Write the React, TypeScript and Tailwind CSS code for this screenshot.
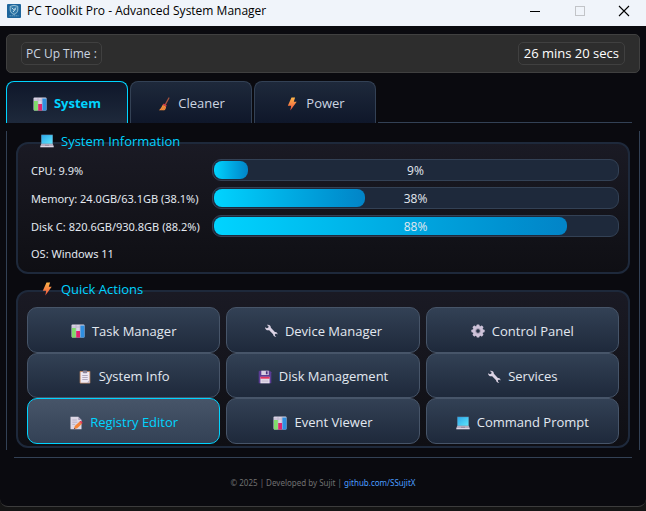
import { useState } from "react";
import type { ReactNode } from "react";

function ChartIcon() {
  return (
    <svg viewBox="0 0 14 14" className="size-[14px] shrink-0" aria-hidden="true">
      <rect x="0.5" y="0.5" width="13" height="13" rx="1" fill="#d9d3e3" />
      <path d="M5 1v12M9 1v12M1 3h12" stroke="#b7aec6" strokeWidth="0.7" />
      <rect x="1" y="4" width="3.8" height="9.5" fill="#7fdc6a" />
      <rect x="5.2" y="7" width="3.8" height="6.5" fill="#e0246f" />
      <rect x="9.4" y="1.5" width="4" height="12" fill="#2f8fe0" />
    </svg>
  );
}

function BroomIcon() {
  return (
    <svg viewBox="0 0 14 14" className="size-[14px] shrink-0" aria-hidden="true">
      <path d="M11.900 1 8.300 7.600" stroke="#a4533f" strokeWidth="1.300" strokeLinecap="round" />
      <path d="m6.800 6.600 2.900 1.700-.6 1.400-3.400-2z" fill="#d83b4c" />
      <path d="M5.700 7.700 9.100 9.700C8.800 12 8.100 13 7.300 13.200H1.800C3.600 12 4.500 10.500 5.700 7.700z" fill="#f2913d" />
      <path d="m6.600 9.400-2.200 3.600M7.900 10.200l-1.400 3" stroke="#d4652d" strokeWidth="0.600" />
    </svg>
  );
}

function BoltIcon() {
  return (
    <svg viewBox="0 0 14 14" className="size-[14px] shrink-0" aria-hidden="true">
      <defs>
        <linearGradient id="bolt" x1="0" y1="0" x2="0" y2="1">
          <stop offset="0" stopColor="#ffb648" />
          <stop offset="1" stopColor="#f0503f" />
        </linearGradient>
      </defs>
      <path d="M6.500.6h3.600L8.800 4.700h2.900L5.300 13.500 6.200 8.800H2.800z" fill="url(#bolt)" />
    </svg>
  );
}

function LaptopIcon() {
  return (
    <svg viewBox="0 0 14 14" className="size-[14px] shrink-0" aria-hidden="true">
      <defs>
        <linearGradient id="screen" x1="0" y1="0" x2="1" y2="1">
          <stop offset="0" stopColor="#2fa8ea" />
          <stop offset="1" stopColor="#5de6fb" />
        </linearGradient>
      </defs>
      <rect x="1" y="0.600" width="12" height="9.600" rx="0.600" fill="#4b6a86" />
      <rect x="1.600" y="1.100" width="10.800" height="8.700" fill="url(#screen)" />
      <path d="M1.300 9.800h11.400l1 2.200H.3z" fill="#b5adbf" />
      <path d="M.3 12h13.400v1.300H.3z" fill="#ded8e6" />
      <path d="M5 11.300h4" stroke="#8b8298" strokeWidth="0.800" />
    </svg>
  );
}

function WrenchIcon() {
  return (
    <svg viewBox="0 0 14 14" className="size-[14px] shrink-0" aria-hidden="true">
      <path
        d="M1 3.200 3 4.300l1.400-.7.100-1.600L2.800 1C5 .4 6.900 1.700 6.900 3.800l4 4.100c1.700-.2 2.900 1.100 2.600 2.700l-1.500-1-1.200.8.300 1.400 1.300.8c-1.700.5-3.200-.6-3.300-2.300L5.200 6.200C3 6.800 1.100 5.400 1 3.200z"
        fill="#dcd3e4"
      />
    </svg>
  );
}

const TEETH = [0, 45, 90, 135, 180, 225, 270, 315];

function GearIcon() {
  return (
    <svg viewBox="0 0 14 14" className="size-[14px] shrink-0" aria-hidden="true">
      {TEETH.map((angle) => (
        <rect key={angle} x="5.500" y="0.400" width="3" height="3" rx="0.800" fill="#cdc2d8" transform={`rotate(${angle} 7 7)`} />
      ))}
      <circle cx="7" cy="7" r="3.600" fill="none" stroke="#cdc2d8" strokeWidth="3.200" />
      <circle cx="7" cy="7" r="2.400" fill="none" stroke="#978ba5" strokeWidth="0.700" />
    </svg>
  );
}

function ClipboardIcon() {
  return (
    <svg viewBox="0 0 14 14" className="size-[14px] shrink-0" aria-hidden="true">
      <rect x="1.700" y="1" width="10.600" height="12.500" rx="0.800" fill="#c08a68" />
      <rect x="2.600" y="2" width="8.800" height="10.700" fill="#eee8f3" />
      <rect x="4.800" y="0.500" width="4.400" height="2.700" rx="0.800" fill="#8c8398" />
      <path d="M4.300 5.500h5.400M4.300 7.500h5.400M4.300 9.500h5.400" stroke="#aaa1b8" strokeWidth="0.900" />
      <path d="m8.900 12.700 2.500-2.500v2.500z" fill="#b9b0c5" />
    </svg>
  );
}

function FloppyIcon() {
  return (
    <svg viewBox="0 0 14 14" className="size-[14px] shrink-0" aria-hidden="true">
      <path d="M1.500.7h10.300l1.500 1.500v11.100H.7V1.500z" fill="#5b3c94" />
      <rect x="3.300" y="0.700" width="7.400" height="4.300" fill="#d8cfe3" />
      <rect x="7.900" y="1.300" width="1.700" height="3" fill="#49307c" />
      <rect x="2.400" y="6.800" width="9.200" height="6.500" fill="#e8e2ee" />
      <rect x="2.400" y="6.800" width="9.200" height="1.900" fill="#e6345f" />
      <path d="M3.600 10.200h6.800M3.600 11.700h6.800" stroke="#b8acc7" strokeWidth="0.600" />
    </svg>
  );
}

function MemoIcon() {
  return (
    <svg viewBox="0 0 14 14" className="size-[14px] shrink-0" aria-hidden="true">
      <path d="M1.500.7h7.800l3.200 3.200v9.400h-11z" fill="#ded8e6" />
      <path d="M9.300.7v3.200h3.200z" fill="#a69bb5" />
      <path d="M3.300 4h4.500M3.300 6.200h5M3.300 8.400h3" stroke="#b2a8bf" strokeWidth="0.800" />
      <path d="m10.400 5.800 2.400 2.200-4.600 4.300-3.300 1 .9-3.200z" fill="#f58438" />
      <path d="m10.400 5.800.9-.8c.9-.5 2.400.8 2.200 1.900l-.7 1.100z" fill="#e4364f" />
      <path d="m4.900 13.300.4-1.500 1 .9z" fill="#55405a" />
    </svg>
  );
}

function AppIcon() {
  return (
    <svg viewBox="0 0 14 14" className="size-[14px] shrink-0" aria-hidden="true">
      <rect width="14" height="14" rx="1" fill="#1d659c" />
      <path d="M3.200 2.300 7 1.300l3.800 1v3.800c0 2-1.500 3.400-3.800 4.300-2.300-.9-3.800-2.300-3.800-4.300z" fill="#3279a9" stroke="#a8cddd" strokeWidth="0.900" />
      <path d="m4.800 3.800 2 1.900 2.400-2M6 8l2.600-3" stroke="#d7eaf2" strokeWidth="0.900" fill="none" />
      <path d="M2.500 11.800h9" stroke="#79aecb" strokeWidth="0.800" strokeDasharray="1.500 .5" />
    </svg>
  );
}

const tabs = [
  { name: "System", icon: <ChartIcon /> },
  { name: "Cleaner", icon: <BroomIcon /> },
  { name: "Power", icon: <BoltIcon /> },
];

const meters = [
  { id: "cpu", label: "CPU: 9.9%", value: 9 },
  { id: "memory", label: "Memory: 24.0GB/63.1GB (38.1%)", value: 38 },
  { id: "disk", label: "Disk C: 820.6GB/930.8GB (88.2%)", value: 88 },
];

const actions = [
  { name: "Task Manager", icon: <ChartIcon /> },
  { name: "Device Manager", icon: <WrenchIcon /> },
  { name: "Control Panel", icon: <GearIcon /> },
  { name: "System Info", icon: <ClipboardIcon /> },
  { name: "Disk Management", icon: <FloppyIcon /> },
  { name: "Services", icon: <WrenchIcon /> },
  { name: "Registry Editor", icon: <MemoIcon /> },
  { name: "Event Viewer", icon: <ChartIcon /> },
  { name: "Command Prompt", icon: <LaptopIcon /> },
];

function TitleBar() {
  return (
    <header className="flex h-[26px] items-center bg-[#f0f4fa] pb-[5px] pl-[7px] text-black">
      <AppIcon />
      <h1 className="ml-[6px] flex-1 text-xs">PC Toolkit Pro - Advanced System Manager</h1>
      <button aria-label="Minimize" className="flex w-[46px] justify-center">
        <svg viewBox="0 0 12 12" className="size-3"><path d="M1 6.500h10" stroke="currentColor" /></svg>
      </button>
      <button aria-label="Maximize" disabled className="flex w-[44px] justify-center text-[#c2c4c8]">
        <svg viewBox="0 0 12 12" className="size-3"><rect x="1.500" y="1.500" width="9" height="9" fill="none" stroke="currentColor" /></svg>
      </button>
      <button aria-label="Close" className="flex w-[44px] justify-center">
        <svg viewBox="0 0 12 12" className="size-3"><path d="m1 1 10 10M11 1 1 11" stroke="currentColor" strokeWidth="1.100" /></svg>
      </button>
    </header>
  );
}

function Group({ title, icon, children }: { title: string; icon: ReactNode; children: ReactNode }) {
  return (
    <section className="relative rounded-xl border-2 border-[#1e293b] bg-linear-to-b from-[#1a1a24] to-[#0f0f14]">
      <h2 className="absolute -top-[13px] left-[22px] flex items-center gap-[7px] text-[13px] leading-5 font-medium text-[#00d4ff]">
        {icon}
        {title}
      </h2>
      {children}
    </section>
  );
}

export default function App() {
  const [tab, setTab] = useState("System");
  const [action, setAction] = useState("Registry Editor");

  return (
    <div className="min-h-screen bg-[#151515] font-['Open_Sans','Noto_Sans',sans-serif] text-[#e2e8f0]">
      <TitleBar />
      <div className="rounded-b-lg border-b border-[#3c3c3c] bg-[#0a0a0f] px-[6px] pt-2 pb-[15px]">
        <div className="flex h-[39px] items-center justify-between rounded-[5px] border border-[#404040] bg-[#2d2d2d] px-[14px]">
          <span className="rounded-[5px] border border-[#404040] px-1 text-xs leading-[21px] text-[#cbd5e1]">PC Up Time :</span>
          <span className="rounded-[5px] border border-[#404040] px-[5px] text-[13px] leading-[21px] text-white">26 mins 20 secs</span>
        </div>

        <div role="tablist" className="mt-2 flex gap-[2px]">
          {tabs.map(({ name, icon }) => (
            <button
              key={name}
              role="tab"
              aria-selected={tab === name}
              onClick={() => setTab(name)}
              className={
                "flex h-[42px] w-[122px] items-center justify-center gap-[7px] rounded-t-lg border border-b-0 pt-[3px] text-[13px] " +
                (tab === name
                  ? "border-[#00d4ff] bg-linear-to-b from-[#0f172a] to-[#1e293b] font-bold text-[#00d4ff]"
                  : "border-[#334155] bg-linear-to-b from-[#1e293b] to-[#0f172a] font-medium text-[#cbd5e1]")
              }
            >
              {icon}
              {name}
            </button>
          ))}
          <div className="mr-2 flex-1 border-b border-[#334155]" />
        </div>

        <main className="pt-2">
          <div className="flex flex-col gap-4 border-x border-[#334155] px-[9px] pt-[11px] pb-[2px]">
            <Group title="System Information" icon={<LaptopIcon />}>
              <div className="grid grid-cols-[170px_1fr] items-center gap-x-[11px] gap-y-[6px] pt-[15px] pr-[9px] pb-[8px] pl-[13px]">
                {meters.map(({ id, label, value }) => (
                  <div key={id} className="contents">
                    <span id={id} className="pt-px font-['Noto_Sans',sans-serif] text-[11px] leading-[21px] whitespace-nowrap">{label}</span>
                    <div
                      role="progressbar"
                      aria-labelledby={id}
                      aria-valuenow={value}
                      className="relative h-[22px] rounded-[9px] border border-[#334155] bg-[#1e293b] p-px"
                    >
                      <div
                        className="h-full rounded-lg bg-linear-to-r from-[#00d4ff] to-[#0284c7]"
                        style={{ width: `calc(${value}% - 2px)` }}
                      />
                      <span className="absolute inset-0 text-center text-xs leading-[21px] font-medium">{value}%</span>
                    </div>
                  </div>
                ))}
                <span className="pt-px font-['Noto_Sans',sans-serif] text-[11px] leading-5">OS: Windows 11</span>
              </div>
            </Group>

            <Group title="Quick Actions" icon={<BoltIcon />}>
              <div className="px-[9px] pt-[15px] pb-[2px]">
                <div className="grid h-[137px] grid-cols-3 grid-rows-3 gap-x-[6px]">
                  {actions.map(({ name, icon }) => (
                    <button
                      key={name}
                      onClick={() => setAction(name)}
                      className={
                        "flex items-center justify-center gap-[7px] rounded-[10px] border pt-[3px] text-[13px] font-medium " +
                        (action === name
                          ? "border-[#00d4ff] bg-linear-to-b from-[#475569] to-[#334155] text-[#00d4ff]"
                          : "border-[#475569] bg-linear-to-b from-[#334155] to-[#1e293b]")
                      }
                    >
                      {icon}
                      {name}
                    </button>
                  ))}
                </div>
              </div>
            </Group>
          </div>
          <div className="mx-2 mt-[7px] border-b border-[#334155]" />
        </main>

        <footer className="pt-[17px] text-center font-['Noto_Sans',sans-serif] text-[8px] leading-4 text-[#707070]">
          © 2025 | Developed by Sujit | <a href="https://github.com/SSujitX" className="text-[#4a9eff]">github.com/SSujitX</a>
        </footer>
      </div>
    </div>
  );
}
